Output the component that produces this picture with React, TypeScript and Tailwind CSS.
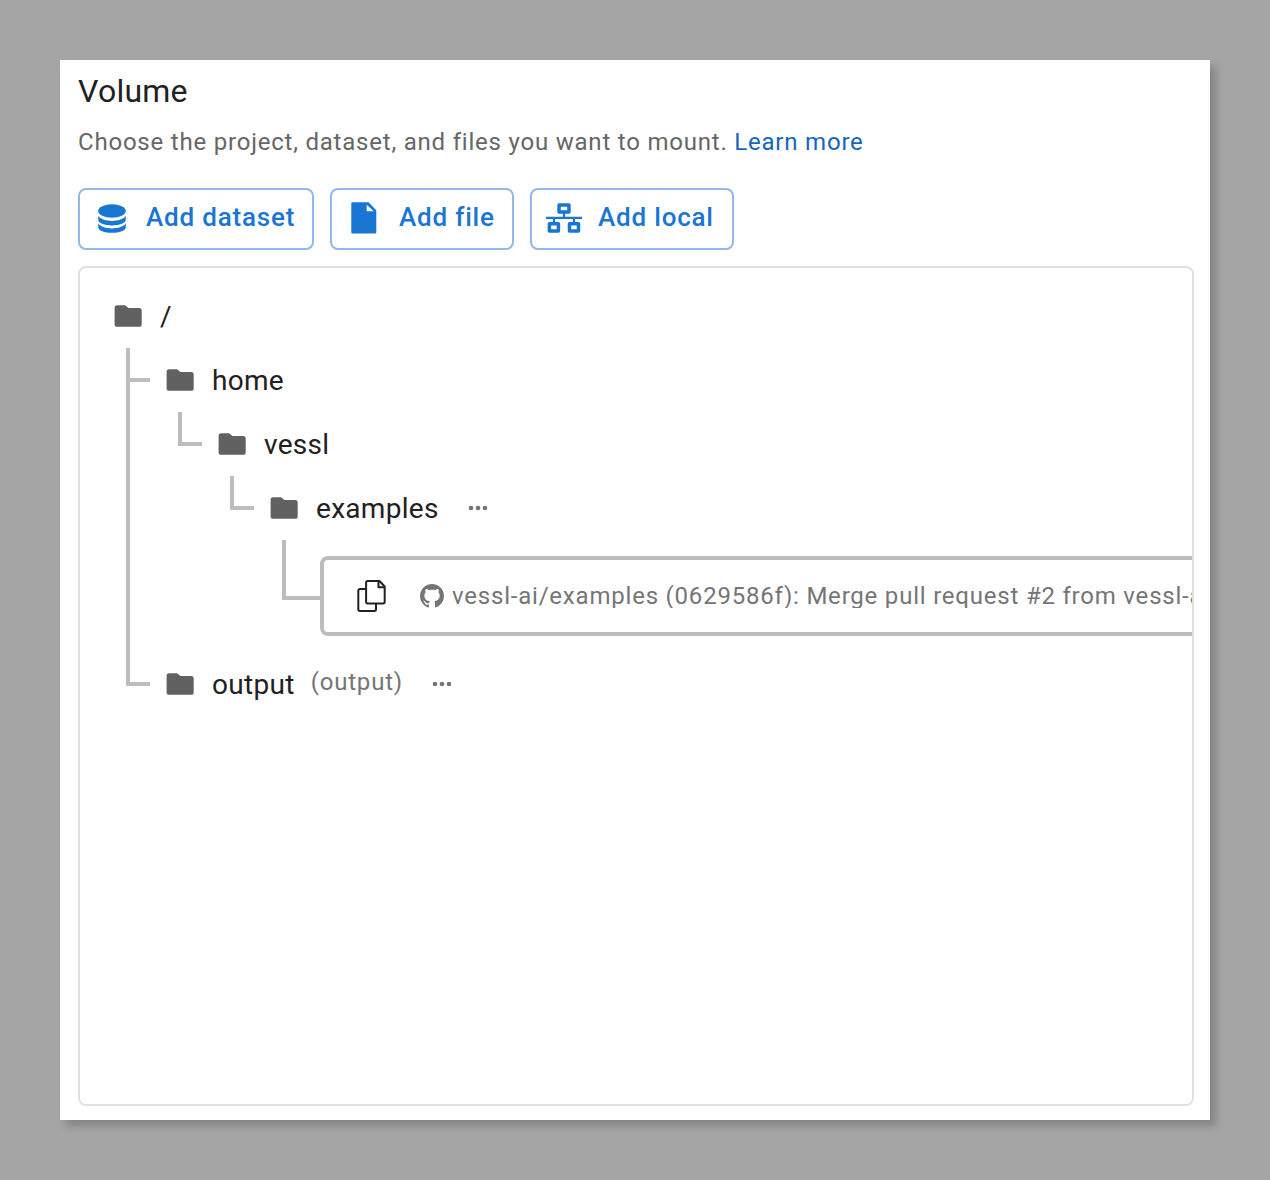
import type { ReactNode } from "react";

function DatabaseIcon() {
  return (
    <svg width="28" height="30" viewBox="0 0 28 30" fill="currentColor" className="shrink-0">
      <ellipse cx="14" cy="8" rx="13.8" ry="6.7" />
      <path d="M.2 12.800C2 16 8 18 14 18s12-2 13.800-5.200v4c0 3.200-6.200 5.600-13.800 5.600S.2 20 .2 16.800z" />
      <path d="M.2 20.200C2 23.400 8 25.400 14 25.400s12-2 13.800-5.200v4c0 3.200-6.200 5.600-13.800 5.600S.2 27.400.2 24.200z" />
    </svg>
  );
}

function FileIcon() {
  return (
    <svg width="26" height="32" viewBox="0 0 26 32" fill="currentColor" className="shrink-0">
      <path fillRule="evenodd" d="M1.500.3H17.500L25.300 8.200V30.300a1.300 1.300 0 0 1-1.300 1.300H1.600A1.300 1.300 0 0 1 .3 30.300V1.500A1.200 1.200 0 0 1 1.500.3zM15.700 2.700V9.300H22.700z" />
    </svg>
  );
}

function NetworkIcon() {
  return (
    <svg width="36" height="30" viewBox="0 0 36 30" fill="none" stroke="currentColor" className="shrink-0">
      <g strokeWidth="3.500" strokeLinejoin="round">
        <rect x="13.050" y="2" width="9.900" height="7.100" />
        <rect x="3.400" y="20.700" width="9" height="7.300" />
        <rect x="23.500" y="20.700" width="9" height="7.300" />
      </g>
      <path d="M18 9v5M0 14.900h36M8 15v5M28 15v5" strokeWidth="2.200" />
    </svg>
  );
}

function FolderIcon() {
  return (
    <svg width="32" height="32" viewBox="0 0 32 32" fill="#616161" className="shrink-0">
      <path d="M5.200 5.200h7.300c.7 0 1.200.2 1.700.7l1.300 1.300c.4.400.8.700 1.500.7h10.100a2.600 2.600 0 0 1 2.600 2.600v13.700a2.600 2.600 0 0 1-2.600 2.600H5.200a2.600 2.600 0 0 1-2.600-2.600V7.800a2.600 2.600 0 0 1 2.600-2.600z" />
    </svg>
  );
}

function CopyIcon() {
  return (
    <svg width="30" height="32" viewBox="0 0 30 32" fill="none" stroke="#212121" strokeWidth="2" strokeLinejoin="round" className="shrink-0">
      <path d="M10 9H4a1.700 1.700 0 0 0-1.700 1.700V29.300A1.700 1.700 0 0 0 4 31H18.300a1.700 1.700 0 0 0 1.700-1.700V23.500" />
      <path d="M11.800 1H23.500L28.700 6.500V21.700a1.700 1.700 0 0 1-1.700 1.700H11.800a1.700 1.700 0 0 1-1.700-1.700V2.700A1.700 1.700 0 0 1 11.800 1z" />
      <path d="M22.500 1.500V7.200H28.500" />
    </svg>
  );
}

function GithubIcon() {
  return (
    <svg width="24" height="24" viewBox="0 0 16 16" fill="#757575" className="shrink-0">
      <path d="M8 0C3.580 0 0 3.580 0 8c0 3.540 2.290 6.530 5.470 7.590.4.070.55-.17.55-.38 0-.19-.01-.82-.01-1.490-2.010.37-2.530-.49-2.690-.94-.09-.23-.48-.94-.82-1.130-.28-.15-.68-.52-.01-.53.63-.01 1.080.58 1.230.82.720 1.210 1.870.87 2.330.66.070-.52.280-.87.510-1.070-1.780-.2-3.640-.89-3.640-3.950 0-.87.310-1.590.820-2.150-.08-.2-.36-1.020.08-2.120 0 0 .67-.21 2.200.82.640-.18 1.320-.27 2-.27s1.360.09 2 .27c1.530-1.040 2.200-.82 2.200-.82.440 1.100.16 1.920.08 2.120.510.560.820 1.270.820 2.150 0 3.070-1.870 3.750-3.650 3.950.290.250.540.730.540 1.480 0 1.070-.01 1.930-.01 2.200 0 .21.150.46.550.38A8.010 8.010 0 0 0 16 8c0-4.420-3.580-8-8-8z" />
    </svg>
  );
}

function MoreIcon() {
  return (
    <svg width="20" height="6" viewBox="0 0 20 6" fill="#757575" className="shrink-0">
      <circle cx="3" cy="3" r="2.300" />
      <circle cx="10" cy="3" r="2.300" />
      <circle cx="17" cy="3" r="2.300" />
    </svg>
  );
}

function ActionButton({ icon, label, className }: { icon: ReactNode; label: string; className: string }) {
  return (
    <button className={`flex h-[62px] items-center rounded-lg border-2 border-[#90b8ea] pb-0.5 text-[26px] font-medium tracking-[0.8px] text-[#1976d2] ${className}`}>
      {icon}
      <span className="pb-0.5 whitespace-nowrap">{label}</span>
    </button>
  );
}

function Branch({ last, children }: { last?: boolean; children: ReactNode }) {
  return (
    <li className="flex">
      <div className="flex w-6 shrink-0 flex-col">
        <div className="h-[34px] border-b-4 border-l-4 border-[#bdbdbd]" />
        {!last && <div className="flex-1 border-l-4 border-[#bdbdbd]" />}
      </div>
      <div className="min-w-0 flex-1">{children}</div>
    </li>
  );
}

function Folder({ name, note, more, children }: { name: string; note?: string; more?: boolean; children?: ReactNode }) {
  return (
    <>
      <div className="flex h-16 items-center pl-3.5">
        <FolderIcon />
        <span className="ml-4 pt-0.5 text-[28px] leading-8 tracking-[0.3px] text-[#212121]">{name}</span>
        {note && <span className="ml-4 pb-1 text-2xl leading-7 tracking-[0.8px] text-[#757575]">{note}</span>}
        {more && <span className="ml-[29px]"><MoreIcon /></span>}
      </div>
      {children && <ul className="pl-7">{children}</ul>}
    </>
  );
}

export default function App() {
  return (
    <div className="h-[1180px] w-[1270px] bg-[#a5a5a5] p-[60px] font-['Roboto',sans-serif]">
      <main className="flex h-[1060px] flex-col bg-white pt-3 pr-4 pb-3.5 pl-[18px] shadow-[6px_6px_8px_rgba(0,0,0,0.2)]">
        <h1 className="text-[32px] leading-[38px] tracking-[0.24px] text-[#212121]">Volume</h1>
        <p className="mt-4 text-2xl leading-8 tracking-[0.79px] whitespace-nowrap text-[#666666]">
          Choose the project, dataset, and files you want to mount. <a className="text-[#1565c0]">Learn more</a>
        </p>
        <div className="mt-[30px] flex gap-4">
          <ActionButton icon={<DatabaseIcon />} label="Add dataset" className="w-[236px] gap-5 pl-[18px]" />
          <ActionButton icon={<FileIcon />} label="Add file" className="w-[184px] gap-[22px] pl-[19px]" />
          <ActionButton icon={<NetworkIcon />} label="Add local" className="w-[204px] gap-4 pl-3.5" />
        </div>
        <section className="mt-4 flex-1 overflow-hidden rounded-lg border-2 border-[#e0e0e0] pt-4 pl-[18px]">
          <Folder name="/">
            <Branch>
              <Folder name="home">
                <Branch last>
                  <Folder name="vessl">
                    <Branch last>
                      <Folder name="examples" more>
                        <li className="flex pb-4">
                          <div className="h-[60px] w-[38px] shrink-0 border-b-4 border-l-4 border-[#bdbdbd]" />
                          <div className="mt-4 flex h-20 flex-1 items-center overflow-hidden rounded-l-lg border-4 border-r-0 border-[#bdbdbd] pl-8">
                            <CopyIcon />
                            <span className="ml-[34px]"><GithubIcon /></span>
                            <span className="ml-2 h-6 overflow-hidden text-2xl leading-6 tracking-[0.79px] whitespace-nowrap text-[#757575]">
                              vessl-ai/examples (0629586f): Merge pull request #2 from vessl-ai
                            </span>
                          </div>
                        </li>
                      </Folder>
                    </Branch>
                  </Folder>
                </Branch>
              </Folder>
            </Branch>
            <Branch last>
              <Folder name="output" note="(output)" more />
            </Branch>
          </Folder>
        </section>
      </main>
    </div>
  );
}
